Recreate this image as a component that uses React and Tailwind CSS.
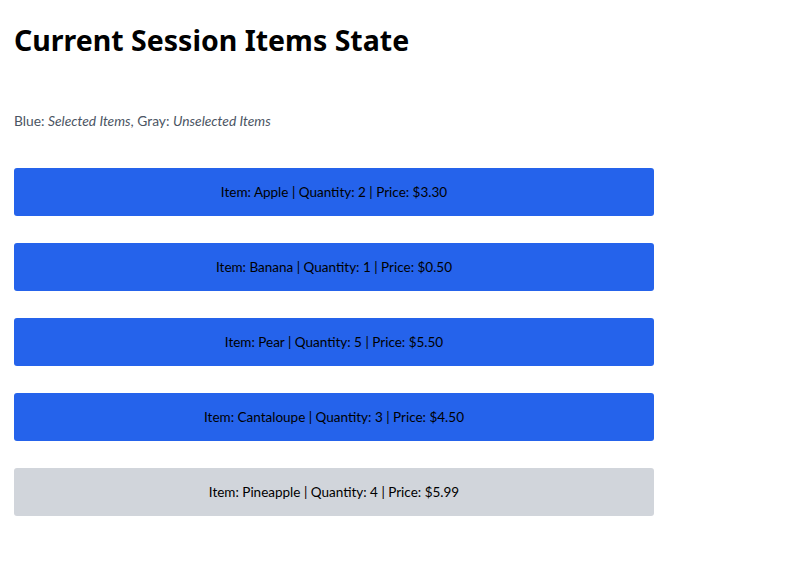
const ITEMS = [
  { name: "Apple", qty: 2, price: "3.30", selected: true },
  { name: "Banana", qty: 1, price: "0.50", selected: true },
  { name: "Pear", qty: 5, price: "5.50", selected: true },
  { name: "Cantaloupe", qty: 3, price: "4.50", selected: true },
  { name: "Pineapple", qty: 4, price: "5.99", selected: false },
];

export default function App() {
  return (
    <div className="min-h-screen bg-white px-[14px] pt-[20px] text-black" style={{ fontFamily: 'Lato, "Noto Sans", sans-serif' }}>
      <h1 className="text-[28.5px] font-bold leading-[40px]" style={{ fontFamily: '"Noto Sans", sans-serif' }}>Current Session Items State</h1>
      <p className="mt-[51px] text-[13.8px] leading-[20px] text-[#4b5563]">
        Blue: <em>Selected Items</em>, Gray: <em>Unselected Items</em>
      </p>
      <div className="mt-[37px] flex w-[640px] flex-col gap-[27px]">
        {ITEMS.map((it) => (
          <div
            key={it.name}
            className={`flex h-[48px] items-center justify-center rounded-[3px] text-[13.5px] ${it.selected ? "bg-[#2563eb]" : "bg-[#d1d5db]"}`}
          >
            Item: {it.name} | Quantity: {it.qty} | Price: ${it.price}
          </div>
        ))}
      </div>
    </div>
  );
}
